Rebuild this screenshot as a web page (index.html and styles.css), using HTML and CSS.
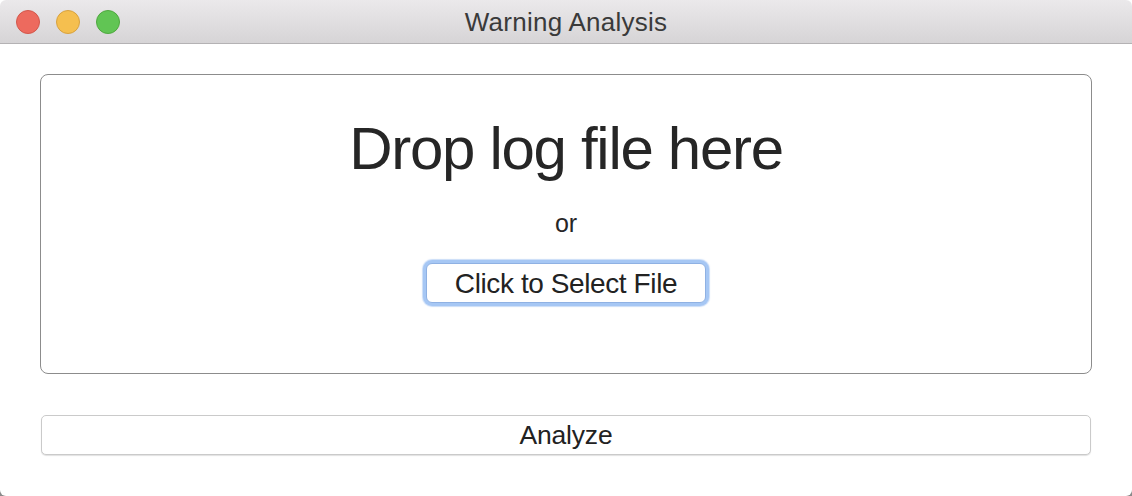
FILE: index.html
```html
<!DOCTYPE html>
<html lang="en">
<head>
<meta charset="utf-8">
<title>Warning Analysis</title>
<link rel="stylesheet" href="styles.css">
</head>
<body>
<div class="window">
  <header class="titlebar">
    <div class="lights">
      <span class="light red"></span>
      <span class="light yellow"></span>
      <span class="light green"></span>
    </div>
    <div class="title">Warning Analysis</div>
  </header>
  <main class="content">
    <section class="dropzone">
      <div class="drop-title">Drop log file here</div>
      <div class="drop-or">or</div>
      <button class="select-btn" type="button">Click to Select File</button>
    </section>
    <button class="analyze-btn" type="button">Analyze</button>
  </main>
</div>
</body>
</html>
```

FILE: styles.css
```css
* { box-sizing: border-box; }
html, body { margin: 0; padding: 0; }
body {
  width: 1132px;
  height: 496px;
  overflow: hidden;
  background: linear-gradient(to bottom, #ffffff 50%, #8a8a8a 50%);
  font-family: "Liberation Sans", Arial, sans-serif;
  color: #262626;
}
.window {
  width: 1132px;
  height: 496px;
  background: #ffffff;
  border-radius: 6px;
  overflow: hidden;
  display: flex;
  flex-direction: column;
}
.titlebar {
  position: relative;
  height: 44px;
  flex: none;
  background: linear-gradient(to bottom, #ebe9eb, #d6d4d6);
  border-bottom: 1px solid #b4b2b4;
  display: flex;
  align-items: center;
  justify-content: center;
}
.lights {
  position: absolute;
  left: 16px;
  top: 10px;
  display: flex;
  gap: 16px;
}
.light {
  width: 24px;
  height: 24px;
  border-radius: 50%;
  display: block;
}
.red { background: #ed6a5e; border: 1px solid #d3574b; }
.yellow { background: #f5bf4f; border: 1px solid #d8a23f; }
.green { background: #61c554; border: 1px solid #4fa83f; }
.title {
  font-size: 26px;
  letter-spacing: 0.25px;
  color: #3a3a3a;
  line-height: 30px;
}
.content {
  flex: 1;
  padding: 30px 40px 0 40px;
  display: flex;
  flex-direction: column;
}
.dropzone {
  height: 300px;
  border: 1px solid #8c8c8c;
  border-radius: 8px;
  display: flex;
  flex-direction: column;
  align-items: center;
  padding-top: 39px;
}
.drop-title {
  font-size: 60px;
  line-height: 70px;
  letter-spacing: -1.3px;
  color: #262626;
}
.drop-or {
  margin-top: 24px;
  font-size: 25px;
  line-height: 30px;
  color: #262626;
}
.select-btn {
  margin-top: 25px;
  width: 280px;
  height: 40px;
  padding: 2px 0 0 0;
  background: #ffffff;
  border: 1px solid #8fb1e3;
  border-radius: 6px;
  box-shadow: 0 0 0 3px #a6c7f4, 0 0 1px 4px rgba(166, 199, 244, 0.6);
  font-family: "Liberation Sans", Arial, sans-serif;
  font-size: 28px;
  letter-spacing: -0.4px;
  line-height: 36px;
  color: #222222;
}
.analyze-btn {
  margin: 41px 1px 0 1px;
  height: 40px;
  padding: 0;
  background: #ffffff;
  border: 1px solid #cacaca;
  border-radius: 5px;
  box-shadow: 0 1px 1px rgba(0, 0, 0, 0.12);
  font-family: "Liberation Sans", Arial, sans-serif;
  font-size: 26.5px;
  letter-spacing: -0.2px;
  line-height: 38px;
  color: #222222;
}
```
